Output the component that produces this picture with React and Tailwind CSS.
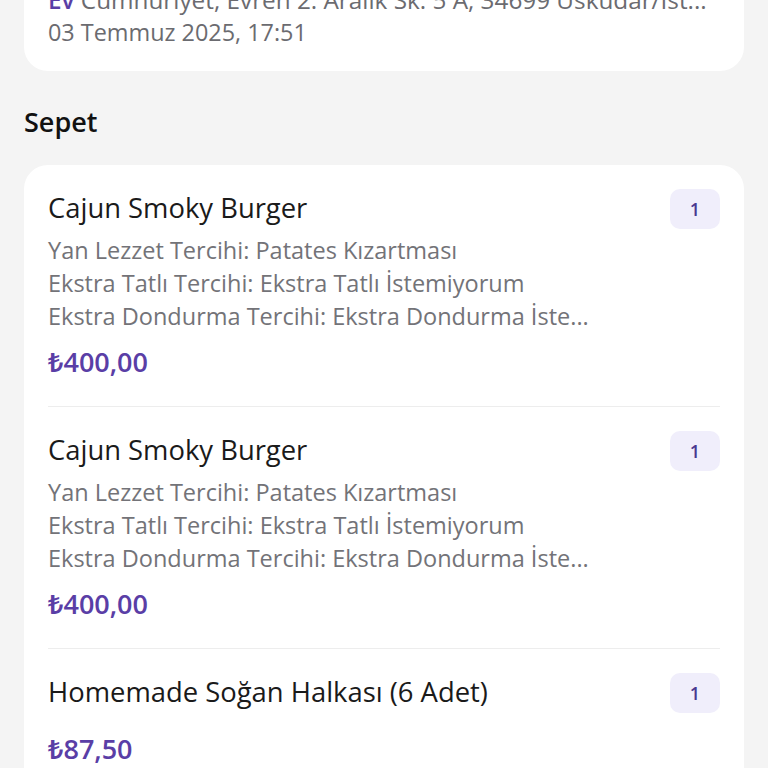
const items = [
  {
    name: "Cajun Smoky Burger",
    options: [
      "Yan Lezzet Tercihi: Patates Kızartması",
      "Ekstra Tatlı Tercihi: Ekstra Tatlı İstemiyorum",
      "Ekstra Dondurma Tercihi: Ekstra Dondurma İste...",
    ],
    price: "₺400,00",
    qty: 1,
  },
  {
    name: "Cajun Smoky Burger",
    options: [
      "Yan Lezzet Tercihi: Patates Kızartması",
      "Ekstra Tatlı Tercihi: Ekstra Tatlı İstemiyorum",
      "Ekstra Dondurma Tercihi: Ekstra Dondurma İste...",
    ],
    price: "₺400,00",
    qty: 1,
  },
  {
    name: "Homemade Soğan Halkası (6 Adet)",
    options: [],
    price: "₺87,50",
    qty: 1,
  },
];

export default function App() {
  return (
    <div
      className="h-[768px] overflow-hidden bg-[#f4f4f4] px-6"
      style={{ fontFamily: '"Open Sans", "Noto Sans", sans-serif' }}
    >
      {/* Address card, scrolled partly off screen */}
      <div className="-mt-[17px] rounded-b-[24px] bg-white px-6 pb-[22px]">
        <p className="truncate text-[24.3px] leading-[33px] text-[#6b6b70]">
          <span className="font-semibold text-[#5a3ea6]">Ev</span> Cumhuriyet, Evren 2. Aralık Sk. 5 A, 34699 Üsküdar/İst...
        </p>
        <p className="text-[23.4px] leading-[33px] text-[#6b6b70]">03 Temmuz 2025, 17:51</p>
      </div>

      <h2 className="mt-[33px] text-[27px] font-semibold leading-[36px] text-[#111]">Sepet</h2>

      <div className="mt-[25px] rounded-[24px] bg-white px-6">
        {items.map((item, i) => (
          <div
            key={i}
            className={
              "flex items-start justify-between gap-4 pb-[26px] pt-[23px] " +
              (i < items.length - 1 ? "border-b border-[#ededed]" : "")
            }
          >
            <div className="min-w-0">
              <p className="text-[27.4px] leading-[40px] text-[#1a1a1a]">{item.name}</p>
              {item.options.length > 0 && (
                <div className="mt-[6px]">
                  {item.options.map((o, j) => (
                    <p key={j} className="text-[23.5px] leading-[33px] text-[#737378]">
                      {o}
                    </p>
                  ))}
                </div>
              )}
              <p
                className={
                  (item.options.length > 0 ? "mt-[11px] " : "mt-[19px] ") +
                  "text-[27px] font-semibold leading-[36px] text-[#5a3ea6]"
                }
              >
                {item.price}
              </p>
            </div>
            <div className="mt-[1px] flex h-[40px] w-[50px] shrink-0 items-center justify-center rounded-[10px] bg-[#f0eefb] text-[18px] font-semibold text-[#4a3890]">
              {item.qty}
            </div>
          </div>
        ))}
      </div>
    </div>
  );
}
